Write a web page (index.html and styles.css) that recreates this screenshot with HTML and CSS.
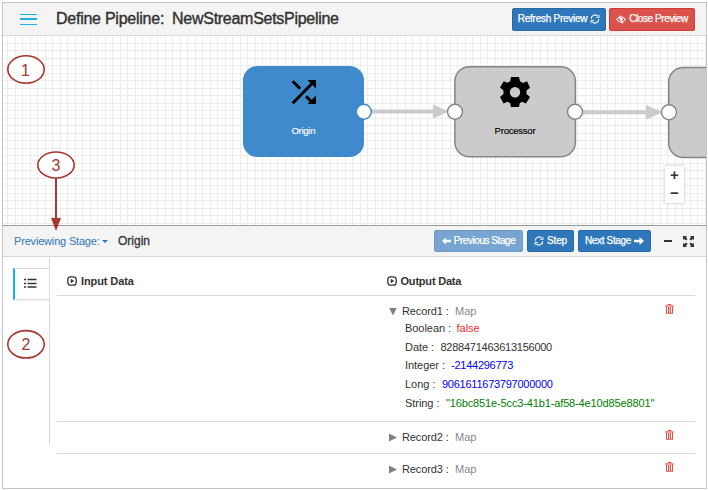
FILE: index.html
```html
<!DOCTYPE html>
<html lang="en">
<head>
<meta charset="utf-8">
<title>Define Pipeline</title>
<link rel="stylesheet" href="styles.css">
</head>
<body>
<svg class="defs" width="0" height="0">
  <symbol id="refresh" viewBox="0 0 16 16"><path d="M2 7.500A6 6 0 0 1 12.500 3.600M14 8.500A6 6 0 0 1 3.500 12.400" fill="none" stroke="currentColor" stroke-width="1.800"/><path d="M15 0.500v6h-6l2-1.500h2.500v-2.500zM1 15.500v-6h6l-2 1.500h-2.500v2.500z" fill="currentColor"/></symbol>
  <symbol id="arrow" viewBox="0 0 10 8"><path d="M5.500 0L10 4L5.500 8V5.300H0V2.700H5.500Z" fill="currentColor"/></symbol>
  <symbol id="play" viewBox="0 0 10 10"><rect x=".8" y=".8" width="8.400" height="8.400" rx="2.600" fill="none" stroke="currentColor" stroke-width="1.300"/><path d="M3.700 2.700L7.200 5L3.700 7.300Z" fill="currentColor"/></symbol>
  <symbol id="trash" viewBox="0 0 9 10"><path d="M0 2H9M3 1.500V.5H6V1.500" fill="none" stroke="currentColor" stroke-width="1"/><path d="M1.500 2.500V9.300H7.500V2.500M3.600 3V9M5.400 3V9" fill="none" stroke="currentColor" stroke-width="1.100"/></symbol>
</svg>
<div class="frame">
  <header class="top">
    <div class="burger"><i></i><i></i><i></i></div>
    <h1><span class="t1">Define Pipeline:</span><span class="t2">NewStreamSetsPipeline</span></h1>
    <button class="btn refresh"><span>Refresh Preview</span> <svg width="10" height="10"><use href="#refresh"/></svg></button>
    <button class="btn danger"><svg width="10" height="9" viewBox="0 0 11 10"><path d="M.6 5Q5.500-1 10.400 5Q5.500 11 .6 5Z" fill="none" stroke="currentColor" stroke-width="1.200"/><circle cx="5.500" cy="4.600" r="1.700" fill="currentColor"/><path d="M3.500 .5L7.500 9.500" stroke="currentColor" stroke-width="1.300"/></svg> <span>Close Preview</span></button>
  </header>
  <main class="canvas">
    <svg width="703" height="189" viewBox="3 36 703 189">
      <g class="wire"><path d="M371 111.500H434M582 112.200H648"/><path class="head" d="M433 104.500L449 111.500L433 118.500ZM646 105L663 112.300L646 119.500Z"/></g>
      <rect x="243" y="66" width="121" height="91" rx="14.500" fill="#3f8acc"/>
      <rect class="node" x="454.900" y="66.800" width="120.500" height="90" rx="14.500"/>
      <rect class="node" x="668.700" y="67.500" width="120" height="90" rx="14.500"/>
      <g fill="none" stroke="#000" stroke-width="3"><path d="M292.700 103.200L313 82.500M292.700 81.200L300.200 88.800M306 96.300L313 103"/></g>
      <path d="M307.500 80H316V88.500ZM316 95.500V104H307.500Z"/>
      <path fill-rule="evenodd" d="M511 77H519L520 81.200L523 83L527 81.300L530 87.700L526.500 90.500V94L530 97L526 103.500L522 101.800L519.700 103.200L519 107H511L510.200 103.200L507.500 101.800L503.500 103.500L500 97L503.500 94V90.500L500 87.500L503.700 81.300L507.500 82.800L510.200 81.200ZM515 87A5.200 5.200 0 1 0 515 97.400A5.200 5.200 0 1 0 515 87Z"/>
      <text class="label light" x="291.500" y="134.400" textLength="24">Origin</text>
      <text class="label" x="494.600" y="134.400" textLength="41">Processor</text>
      <g class="ports"><circle class="blue" cx="363.800" cy="111.700" r="7.500"/><circle cx="455" cy="111.700" r="7.500"/><circle cx="575" cy="111.700" r="7.500"/><circle cx="669" cy="112.200" r="7.500"/></g>
    </svg>
    <div class="zoom"><span>+</span><span>−</span></div>
  </main>
  <div class="stagebar">
    <a class="stage">Previewing Stage:</a><b class="caret"></b><strong>Origin</strong>
    <button class="btn prev"><svg class="flip" width="9" height="8"><use href="#arrow"/></svg> <span>Previous Stage</span></button>
    <button class="btn step"><svg width="10" height="10"><use href="#refresh"/></svg> <span>Step</span></button>
    <button class="btn next"><span>Next Stage</span> <svg width="10" height="8"><use href="#arrow"/></svg></button>
    <i class="minus"></i>
    <svg class="expand" width="11" height="11" viewBox="0 0 11 11"><path d="M0 0H4L2.900 1.300L4.600 3L3 4.600L1.300 2.900L0 4ZM11 0V4L9.700 2.900L8 4.600L6.400 3L8.100 1.300L7 0ZM0 11V7L1.300 8.100L3 6.400L4.600 8L2.900 9.700L4 11ZM11 11H7L8.100 9.700L6.400 8L8 6.400L9.700 8.100L11 7Z" fill="#333"/></svg>
  </div>
  <section class="panel">
    <aside>
      <div class="tab"><svg width="13" height="10" viewBox="0 0 13 10"><path d="M0 1.500H2M0 5.500H2M0 9H2M3.500 1.500H12.500M3.500 5.500H12.500M3.500 9H12.500" stroke="#333" stroke-width="1.600"/></svg></div>
    </aside>
    <div class="data">
      <div class="row heads"><h2><svg width="10" height="10"><use href="#play"/></svg><span>Input Data</span></h2><h2><svg width="10" height="10"><use href="#play"/></svg><span class="out">Output Data</span></h2></div>
      <div class="row first"><div class="record">
        <div class="name"><i class="open"></i><span>Record1 :</span><em>Map</em></div>
        <dl>
          <div><dt class="k1">Boolean :</dt><dd class="bool">false</dd></div>
          <div><dt class="k2">Date :</dt><dd class="date">8288471463613156000</dd></div>
          <div><dt class="k3">Integer :</dt><dd class="num">-2144296773</dd></div>
          <div><dt class="k4">Long :</dt><dd class="num">9061611673797000000</dd></div>
          <div><dt class="k5">String :</dt><dd class="str">"16bc851e-5cc3-41b1-af58-4e10d85e8801"</dd></div>
        </dl></div>
        <svg class="trash" width="9" height="10"><use href="#trash"/></svg></div>
      <div class="row short"><div class="record"><div class="name"><i class="closed"></i><span>Record2 :</span><em>Map</em></div></div><svg class="trash" width="9" height="10"><use href="#trash"/></svg></div>
      <div class="row short last"><div class="record"><div class="name"><i class="closed"></i><span>Record3 :</span><em>Map</em></div></div><svg class="trash" width="9" height="10"><use href="#trash"/></svg></div>
    </div>
  </section>
</div>
<svg class="callouts" width="80" height="370" viewBox="0 0 80 370">
  <g fill="#fff" stroke="#a93630" stroke-width="1.600"><ellipse cx="26" cy="69.500" rx="18.200" ry="13.700"/><ellipse cx="56" cy="165" rx="18.200" ry="13"/><ellipse cx="26" cy="344.300" rx="18.200" ry="13.700"/></g>
  <path d="M56 178V219" stroke="#a93630" stroke-width="2"/><path d="M51 218H61L56 231Z" fill="#a93630"/>
  <g class="digit"><text x="25.500" y="75.500">1</text><text x="56" y="171">3</text><text x="26" y="350">2</text></g>
</svg>
</body>
</html>
```
FILE: styles.css
```css
* { box-sizing: border-box; }
body { margin: 0; padding: 2px; width: 708px; height: 490px; overflow: hidden; position: relative; background: #fff; font: 12px/16px "Liberation Sans", Arial, sans-serif; color: #333; }
.defs, .callouts { position: absolute; left: 0; top: 0; pointer-events: none; }
.frame { width: 705px; height: 487px; border: 1px solid #c4c4c4; overflow: hidden; }
.top { height: 33px; border-bottom: 1px solid #d9d9d9; background: #f4f4f4; display: flex; align-items: center; padding: 0 11px 0 17px; }
.burger { width: 17px; height: 11px; display: flex; flex-direction: column; justify-content: space-between; }
.burger i { height: 1px; background: #1ab3e8; }
.burger i:nth-child(2) { height: 2px; }
h1 { margin: 0 auto 0 19px; font-size: 16px; line-height: 20px; font-weight: 400; display: flex; gap: 8px; -webkit-text-stroke: .4px #333; white-space: nowrap; }
.t1 { letter-spacing: -.25px; }
.t2 { letter-spacing: -.28px; }
.btn { height: 22px; margin: 0; padding: 0; border: 1px solid #2868a3; border-radius: 2px; background: #2e77ba; color: #fff; font: 10px/14px "Liberation Sans", Arial, sans-serif; display: flex; align-items: center; justify-content: center; gap: 3px; flex: none; white-space: nowrap; -webkit-text-stroke: .25px #fff; }
.refresh { width: 94px; height: 23px; margin-right: 3px; letter-spacing: -.27px; }
.danger { width: 86px; height: 23px; background: #db514b; border-color: #d23c35; letter-spacing: -.4px; }
.canvas { height: 189px; position: relative; background-color: #fff; background-image: linear-gradient(90deg, #ededed 1px, transparent 1px), linear-gradient(90deg, #ededed 1px, transparent 1px), linear-gradient(#ededed 1px, transparent 1px), linear-gradient(#ededed 1px, transparent 1px); background-size: 15px 15px; background-position: 4px 0, 12px 0, 0 7px, 0 14px; }
.canvas > svg { display: block; }
.wire { fill: none; stroke: #cbcbcb; stroke-width: 4; }
.wire .head { fill: #cbcbcb; stroke: none; }
.node { fill: #cbcbcb; stroke: #858585; stroke-width: 1.5; }
.ports circle { fill: #fff; stroke: #858585; stroke-width: 1.4; }
.ports .blue { stroke: #3f8acc; }
.label { font-size: 9.5px; fill: #000; stroke: #000; stroke-width: .15px; }
.light { fill: #fff; stroke: #fff; }
.zoom { position: absolute; left: 662px; top: 130px; width: 19px; height: 37px; background: #fff; box-shadow: 0 0 3px #bbb; display: grid; grid-template-rows: 18px 18px; text-align: center; font: bold 15px/18px "Liberation Sans", Arial, sans-serif; }
.stagebar { height: 32px; border-top: 1px solid #999; border-bottom: 1px solid #d9d9d9; background: #f4f4f4; display: flex; align-items: center; padding: 0 12px 0 11px; }
.stage { color: #2e77ba; font-size: 11px; white-space: nowrap; width: 85px; letter-spacing: -.18px; }
.caret { width: 0; border: 3px solid transparent; border-top-color: #2e77ba; border-bottom: 0; margin: 1px 10px 0 3px; }
.stagebar strong { font-weight: 400; -webkit-text-stroke: .3px #333; margin-right: auto; font-size: 12px; }
.prev { width: 89px; margin-right: 4px; background: #77a4d0; border-color: #6d9bc6; letter-spacing: -.45px; }
.step { width: 47px; margin-right: 4px; letter-spacing: -.1px; }
.next { width: 73px; margin-right: 13px; letter-spacing: -.35px; }
.flip { transform: scaleX(-1); }
.minus { width: 8px; height: 2px; background: #333; margin-right: 11px; }
.panel { display: flex; height: 231px; }
aside { width: 47px; height: 188px; border-right: 1px solid #d9d9d9; padding-top: 11px; padding-left: 10px; }
.tab { width: 36px; height: 32px; border: 1px solid #ddd; border-right: 0; border-left: 2px solid #1ab3e8; display: flex; align-items: center; padding: 0 0 3px 9px; box-shadow: 0 1px 2px #eee; }
.data { width: 638px; margin-left: 7px; }
.row { border-bottom: 1px solid #d9d9d9; display: flex; }
.heads { height: 39px; padding: 16px 0 0 10px; }
h2 { margin: 0; width: 319.500px; flex: none; display: flex; gap: 4px; font-size: 11px; line-height: 16px; align-items: center; height: 16px; white-space: nowrap; letter-spacing: -.1px; }
.out { letter-spacing: -.2px; }
.record { margin-left: 332px; width: 276px; }
.first { height: 126px; padding-top: 7px; }
.short { height: 32px; padding-top: 7px; }
.last { border-bottom: 0; }
.name { height: 17px; line-height: 17px; display: flex; align-items: center; font-size: 11px; }
.name span { width: 53px; margin-left: 5px; white-space: nowrap; letter-spacing: -.1px; }
.name em { color: #888; font-style: normal; }
.open { width: 8px; height: 8px; background: #808080; clip-path: polygon(0 0, 100% 0, 50% 100%); }
.closed { width: 8px; height: 8px; background: #808080; clip-path: polygon(0 0, 100% 50%, 0 100%); }
dl { margin: -1px 0 0 16px; font-size: 11px; white-space: nowrap; }
dl div { display: flex; height: 18.700px; line-height: 18px; }
dt { letter-spacing: -.05px; }
dd { margin: 0; }
.k1 { width: 51.500px; } .k2 { width: 35.500px; } .k3 { width: 46px; } .k4 { width: 37px; } .k5 { width: 41px; }
.bool { color: #f5302b; } .date { color: #333; } .num { color: #00f; } .str { color: #008000; }
.date, .num { letter-spacing: -.25px; }
.str { letter-spacing: -.135px; }
.trash { color: #db514b; margin-top: 1px; }
.digit { fill: #a93630; font-size: 16px; text-anchor: middle; }
```
